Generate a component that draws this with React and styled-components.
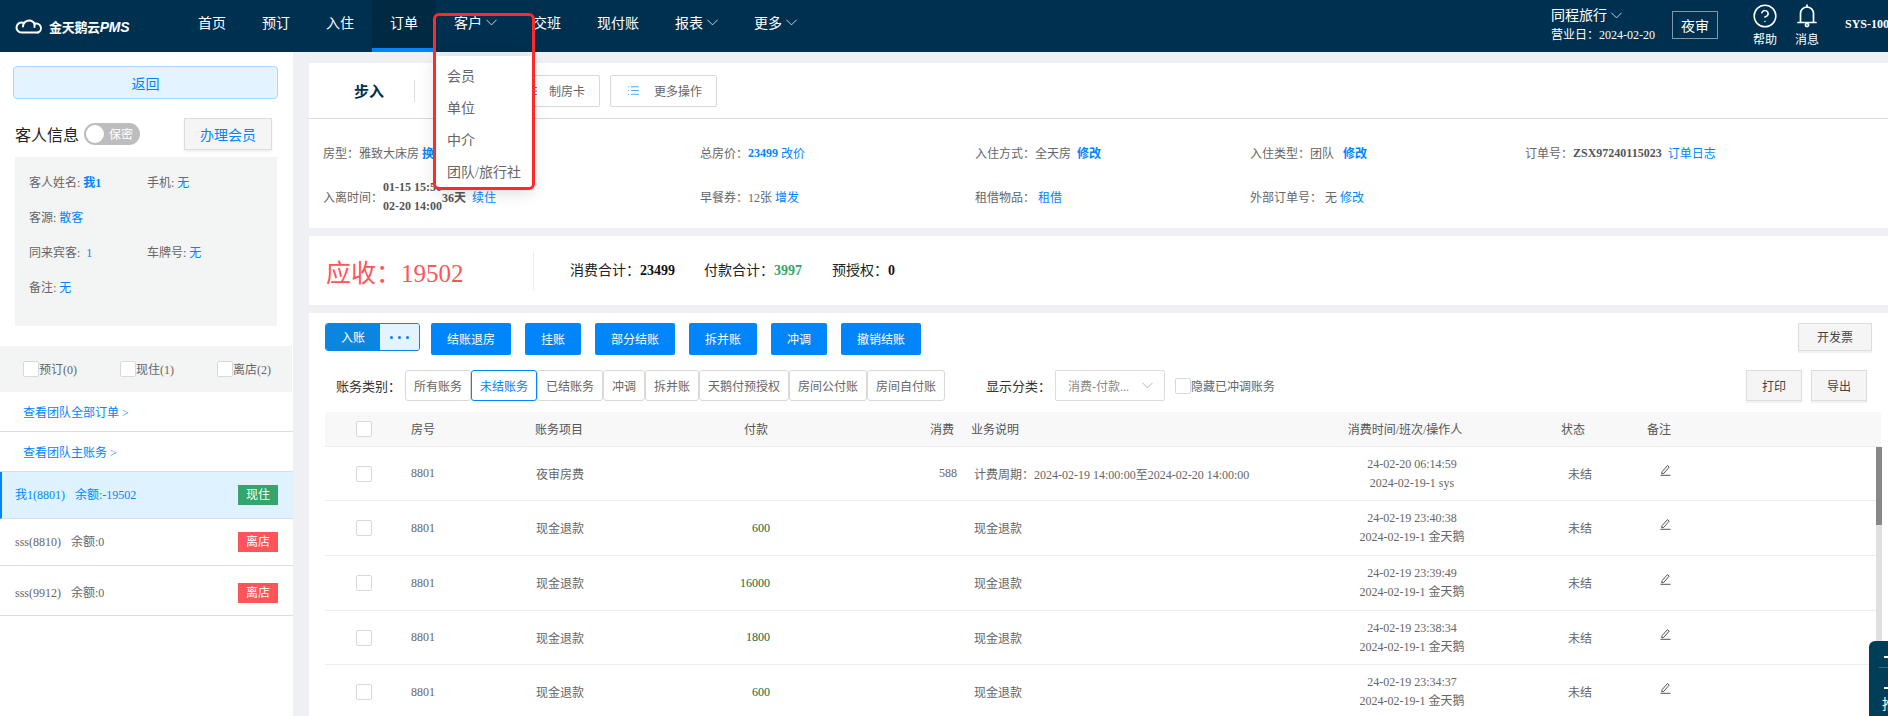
import styled, { createGlobalStyle } from "styled-components";
import { ChevronDown, CircleHelp, List } from "lucide-react";

const GlobalStyle = createGlobalStyle`
  * { box-sizing: border-box; }
  html, body { margin: 0; padding: 0; background: #eff0f4; }
  body {
    font-family: "Liberation Serif", "Noto Sans CJK SC", serif;
    font-size: 12px;
    color: #666;
  }
`;

const Page = styled.div`
  position: relative;
  width: 1888px;
  height: 716px;
  overflow: hidden;
  background: #eff0f4;
`;

const Header = styled.header`
  display: flex;
  height: 52px;
  background: #00304f;
  color: #fff;
`;

const Logo = styled.div`
  display: flex;
  align-items: center;
  gap: 5px;
  width: 180px;
  padding-left: 15px;
  flex-shrink: 0;
`;

const LogoText = styled.span`
  font-family: "Noto Sans CJK SC", sans-serif;
  font-size: 13px;
  font-weight: 700;
  white-space: nowrap;
  letter-spacing: -0.3px;

  em {
    font-family: "Liberation Sans", sans-serif;
    font-size: 14px;
    font-style: italic;
    font-weight: 700;
  }
`;

const Nav = styled.nav`
  display: flex;
  flex: 1;
`;

const NavItem = styled.div`
  display: flex;
  align-items: center;
  gap: 4px;
  height: 52px;
  padding: 0 18px 4px;
  font-size: 14px;
  white-space: nowrap;
  background: ${(p) => (p.$active ? "#012a42" : "transparent")};
  border-bottom: 4px solid ${(p) => (p.$active ? "#0084ff" : "transparent")};
`;

const Arrow = styled(ChevronDown)`
  margin: 0 -4px;
  flex-shrink: 0;
`;

const HeaderRight = styled.div`
  display: flex;
  width: 337px;
  overflow: hidden;
  flex-shrink: 0;
`;

const HotelBlock = styled.div`
  width: 121px;
  padding-top: 6px;
  flex-shrink: 0;
`;

const HotelName = styled.div`
  display: flex;
  align-items: center;
  gap: 4px;
  font-size: 14px;
  line-height: 19px;
`;

const BizDate = styled.div`
  margin-top: 1px;
  font-size: 12px;
  line-height: 18px;
  white-space: nowrap;
`;

const AuditButton = styled.div`
  display: flex;
  align-items: center;
  justify-content: center;
  width: 46px;
  height: 28px;
  margin-top: 11px;
  font-size: 14px;
  border: 1px solid rgba(255, 255, 255, 0.5);
  flex-shrink: 0;
`;

const HeaderTool = styled.div`
  display: flex;
  flex-direction: column;
  align-items: center;
  width: 42px;
  margin-left: ${(p) => p.$ml || 0}px;
  flex-shrink: 0;
  font-size: 12px;
`;

const ToolIcon = styled.div`
  display: flex;
  align-items: center;
  justify-content: center;
  height: 26px;
  margin-top: 3px;
  margin-bottom: 1px;
`;

const UserName = styled.div`
  margin: 17px 0 0 17px;
  font-size: 12px;
  line-height: 14px;
  font-weight: 700;
  white-space: nowrap;
`;

const Body = styled.div`
  display: flex;
  height: 664px;
`;

const Sidebar = styled.aside`
  width: 293px;
  background: #fff;
  flex-shrink: 0;
`;

const BackButton = styled.div`
  display: flex;
  align-items: center;
  justify-content: center;
  height: 33px;
  margin: 14px 15px 0 13px;
  font-size: 14px;
  color: #0084ff;
  background: #e3f3ff;
  border: 1px solid #a9d7ff;
  border-radius: 4px;
`;

const GuestHead = styled.div`
  display: flex;
  align-items: center;
  height: 32px;
  margin-top: 19px;
  padding: 0 21px 0 15px;
`;

const GuestTitle = styled.span`
  font-size: 16px;
  color: #222;
`;

const Toggle = styled.div`
  display: flex;
  align-items: center;
  width: 56px;
  height: 22px;
  margin-left: 5px;
  padding: 2px;
  color: #fff;
  background: #bdbdbd;
  border-radius: 11px;
`;

const ToggleKnob = styled.span`
  width: 18px;
  height: 18px;
  margin-right: 5px;
  background: #fff;
  border-radius: 50%;
`;

const MemberButton = styled.div`
  display: flex;
  align-items: center;
  justify-content: center;
  width: 88px;
  height: 32px;
  margin-left: auto;
  font-size: 14px;
  color: #0084ff;
  background: #f5f5f5;
  border: 1px solid #ddd;
  box-shadow: 0 2px 2px rgba(0, 0, 0, 0.06);
`;

const InfoBox = styled.div`
  display: grid;
  grid-template-columns: 118px 1fr;
  grid-auto-rows: 35px;
  align-items: center;
  height: 169px;
  margin: 7px 16px 0 15px;
  padding: 7px 14px 0;
  background: #f3f4f4;
`;

const BlueText = styled.span`
  color: #0084ff;
  font-weight: ${(p) => (p.$bold ? 700 : 400)};
  margin-left: ${(p) => p.$ml || 0}px;
`;

const StrongText = styled.span`
  color: #555;
  font-weight: 700;
`;

const FilterBand = styled.div`
  display: flex;
  align-items: center;
  width: 292px;
  height: 46px;
  margin-top: 20px;
  padding-left: 23px;
  background: #f3f4f4;
`;

const FilterItem = styled.label`
  display: flex;
  align-items: center;
  width: 97px;
  flex-shrink: 0;
  white-space: nowrap;
`;

const Box = styled.span`
  display: inline-block;
  width: 16px;
  height: 16px;
  background: #fff;
  border: 1px solid #d9d9d9;
  border-radius: 2px;
  flex-shrink: 0;
`;

const TeamLink = styled.div`
  display: flex;
  align-items: center;
  height: 40px;
  padding-left: 23px;
  color: #0084ff;
  border-bottom: 1px solid #ddd;
`;

const RoomRow = styled.div`
  display: flex;
  align-items: flex-start;
  height: ${(p) => p.$h}px;
  padding: ${(p) => p.$top}px 15px 0 ${(p) => (p.$active ? 13 : 15)}px;
  font-size: 12px;
  line-height: 20px;
  color: ${(p) => (p.$active ? "#0084ff" : "#666")};
  background: ${(p) => (p.$active ? "#def3ff" : "#fff")};
  border-left: ${(p) => (p.$active ? "2px solid #0084ff" : "none")};
  border-bottom: 1px solid #ddd;
`;

const RoomName = styled.span`
  width: ${(p) => p.$w}px;
`;

const StatusTag = styled.span`
  display: flex;
  align-items: center;
  justify-content: center;
  width: 40px;
  height: 20px;
  margin-left: auto;
  font-size: 12px;
  color: #fff;
  background: ${(p) => (p.$in ? "#34a56b" : "#ff5558")};
`;

const Main = styled.main`
  display: flex;
  flex-direction: column;
  gap: 8px;
  flex: 1;
  margin: 11px 0 0 16px;
  min-width: 0;
`;

const Card = styled.section`
  background: #fff;
`;

const Toolbar = styled.div`
  display: flex;
  align-items: center;
  height: 56px;
  padding-left: 45px;
  border-bottom: 1px solid #d9d9d9;
`;

const StepIn = styled.span`
  font-size: 15px;
  font-weight: 700;
  color: #00304f;
`;

const ToolDivider = styled.span`
  width: 1px;
  height: 22px;
  margin: 0 94px 0 30px;
  background: #ddd;
`;

const OutlineButton = styled.div`
  display: flex;
  align-items: center;
  gap: 8px;
  height: 32px;
  margin-right: ${(p) => p.$mr || 0}px;
  padding: ${(p) => p.$pad};
  color: #666;
  background: #fff;
  border: 1px solid #d9d9d9;
  border-radius: 2px;
`;

const OrderGrid = styled.div`
  display: grid;
  grid-template-columns: 377px repeat(4, 275px);
  grid-auto-rows: 44px;
  align-items: center;
  height: 109px;
  padding: 12px 0 0 14px;
`;

const Field = styled.div`
  display: flex;
  align-items: center;
  white-space: nowrap;
`;

const DateStack = styled.div`
  width: 59px;
  line-height: 19px;
  font-weight: 700;
  color: #555;
`;

const TotalCard = styled(Card)`
  display: flex;
  align-items: center;
  height: 69px;
  padding-left: 17px;
  color: #222;
  font-size: 14px;
`;

const Receivable = styled.span`
  width: 207px;
  font-size: 25px;
  color: #ff5558;
  white-space: nowrap;
`;

const TotalDivider = styled.span`
  width: 1px;
  height: 39px;
  margin-right: 36px;
  background: #eee;
`;

const TotalItem = styled.span`
  width: ${(p) => p.$w}px;
  margin-top: -4px;
  white-space: nowrap;

  b {
    color: ${(p) => p.$color || "#111"};
  }
`;

const LedgerCard = styled(Card)`
  position: relative;
  flex: 1;
  padding: 10px 7px 0 16px;
  overflow: hidden;
`;

const ActionRow = styled.div`
  display: flex;
  align-items: flex-start;
  gap: 14px;
  height: 32px;
`;

const SplitButton = styled.div`
  display: flex;
  width: 95px;
  height: 28px;
  margin-right: -3px;
  border: 1px solid #0a85e0;
  border-radius: 3px;
  overflow: hidden;
`;

const SplitMain = styled.span`
  display: flex;
  align-items: center;
  justify-content: center;
  width: 54px;
  color: #fff;
  background: #0a85e0;
`;

const SplitMore = styled.span`
  display: flex;
  align-items: center;
  justify-content: center;
  flex: 1;
  gap: 5px;
  background: #e3f3ff;

  i {
    width: 3px;
    height: 3px;
    background: #0a85e0;
    border-radius: 50%;
  }
`;

const ActionButton = styled.div`
  display: flex;
  align-items: center;
  justify-content: center;
  width: ${(p) => p.$w}px;
  height: 32px;
  color: #fff;
  background: #0085fb;
  border-radius: 2px;
`;

const GreyButton = styled.div`
  display: flex;
  align-items: center;
  justify-content: center;
  width: ${(p) => p.$w}px;
  height: ${(p) => p.$h}px;
  margin-left: ${(p) => p.$ml || "0"};
  margin-right: ${(p) => p.$mr || 0}px;
  color: #444;
  background: #f5f5f5;
  border: 1px solid #ddd;
  box-shadow: 0 2px 1px rgba(0, 0, 0, 0.05);
`;

const FilterRow = styled.div`
  display: flex;
  align-items: center;
  height: 31px;
  margin-top: 15px;
`;

const FilterLabel = styled.span`
  width: ${(p) => p.$w}px;
  margin-left: ${(p) => p.$ml}px;
  font-size: 13px;
  color: #333;
  white-space: nowrap;
`;

const Segment = styled.div`
  display: flex;
  align-items: center;
  justify-content: center;
  width: ${(p) => p.$w}px;
  height: 31px;
  color: ${(p) => (p.$active ? "#0084ff" : "#666")};
  border: 1px solid ${(p) => (p.$active ? "#0084ff" : "#d9d9d9")};
  border-radius: 3px;
`;

const SelectBox = styled.div`
  display: flex;
  align-items: center;
  justify-content: space-between;
  width: 110px;
  height: 31px;
  padding: 0 7px 0 12px;
  color: #888;
  border: 1px solid #ddd;
  border-radius: 2px;
`;

const HideCheck = styled.label`
  display: flex;
  align-items: center;
  margin-left: 10px;
`;

const TableHead = styled.div`
  display: grid;
  grid-template-columns: 86px 124px 135px 98px 186px 346px 210px 137px 1fr;
  align-items: center;
  height: 35px;
  margin-top: 11px;
  color: #555;
  background: #f8f8f8;
  border-bottom: 1px solid #eee;
`;

const TableRow = styled.div`
  display: grid;
  grid-template-columns: 86px 124px 135px 100px 187px 343px 210px 137px 1fr;
  align-items: center;
  height: ${(p) => p.$h}px;
  margin-right: 5px;
  color: #666;
  border-bottom: 1px solid #eee;
`;

const CheckCell = styled.div`
  padding-left: 31px;
  display: flex;
`;

const Cell = styled.div`
  text-align: ${(p) => p.$align || "left"};
  padding-left: ${(p) => p.$pl || 0}px;
  color: ${(p) => p.$color || "inherit"};
  white-space: nowrap;
`;

const TimeCell = styled.div`
  padding-left: 14px;
  text-align: center;
  line-height: 19px;
`;

const EditCell = styled.div`
  display: flex;
  padding: 0 0 8px 13px;
`;

const ScrollTrack = styled.div`
  position: absolute;
  top: 134px;
  right: 6px;
  bottom: 0;
  width: 6px;
  background: #e0e0e0;
`;

const ScrollThumb = styled.div`
  width: 6px;
  height: 78px;
  background: #888;
`;

const DropMenu = styled.div`
  position: absolute;
  top: 56px;
  left: 436px;
  width: 96px;
  height: 132px;
  padding-top: 3px;
  background: #fff;
  box-shadow: 0 4px 16px rgba(0, 0, 0, 0.15);
`;

const DropItem = styled.div`
  display: flex;
  align-items: center;
  height: 32px;
  padding-left: 11px;
  font-size: 14px;
  color: #666;
  white-space: nowrap;
`;

const Annotation = styled.div`
  position: absolute;
  top: 13px;
  left: 433px;
  width: 102px;
  height: 177px;
  border: 3px solid #ff2a2a;
  border-radius: 6px;
`;

const CornerWidget = styled.div`
  position: absolute;
  top: 641px;
  left: 1869px;
  width: 40px;
  height: 90px;
  padding-left: 10px;
  color: #fff;
  background: #003e58;
  border-radius: 6px 0 0 0;
`;

const CornerDash = styled.div`
  width: 10px;
  height: 2px;
  margin: ${(p) => p.$top}px 0 0 5px;
  background: #fff;
`;

const CornerLine = styled.div`
  height: 1px;
  margin-top: 9px;
  background: #2f6c85;
`;

const CornerText = styled.div`
  margin: 7px 0 0 3px;
  font-size: 14px;
  line-height: 18px;
  white-space: nowrap;
`;

const Cloud = () => (
  <svg width="29" height="16" viewBox="0 0 29 16" fill="none" stroke="#fff" strokeWidth="2" strokeLinecap="round">
    <path d="M23 14.5H6.5a5 5 0 1 1 2.2-9.5" />
    <path d="M8 8.5A6.2 6.2 0 0 1 19.5 5.5V9" />
    <path d="M19.5 5.8a4.4 4.4 0 1 1 3.5 8.7" />
  </svg>
);

const BellIcon = () => (
  <svg width="20" height="25" viewBox="0 0 20 25" fill="none" stroke="#fff" strokeWidth="1.7">
    <path d="M3.5 18V9.5a6.5 6.5 0 0 1 13 0V18" />
    <path d="M1 18.5h18" strokeLinecap="round" />
    <path d="M10 3V1" strokeLinecap="round" />
    <circle cx="10" cy="21" r="1.6" />
  </svg>
);

const EditIcon = () => (
  <svg width="11" height="12" viewBox="0 0 11 12" fill="none" stroke="#555" strokeWidth="1">
    <path d="M2 7.8 7.4 1.6l1.8 1.5-5.4 6.2-2.1.5z" strokeLinejoin="round" />
    <path d="M0.5 11.3h10" />
  </svg>
);

const navItems = [
  { label: "首页" },
  { label: "预订" },
  { label: "入住" },
  { label: "订单", active: true },
  { label: "客户", arrow: true },
  { label: "交班" },
  { label: "现付账" },
  { label: "报表", arrow: true },
  { label: "更多", arrow: true },
];

const actions = [
  ["结账退房", 80],
  ["挂账", 56],
  ["部分结账", 80],
  ["拆并账", 68],
  ["冲调", 56],
  ["撤销结账", 80],
];

const segments = [
  ["所有账务", 66],
  ["未结账务", 66, true],
  ["已结账务", 66],
  ["冲调", 42],
  ["拆并账", 54],
  ["天鹅付预授权", 90],
  ["房间公付账", 78],
  ["房间自付账", 78],
];

const rows = [
  { h: 54, item: "夜审房费", cost: "588", note: "计费周期：2024-02-19 14:00:00至2024-02-20 14:00:00", time: "24-02-20 06:14:59", op: "2024-02-19-1 sys" },
  { h: 55, item: "现金退款", pay: "600", note: "现金退款", time: "24-02-19 23:40:38", op: "2024-02-19-1 金天鹅" },
  { h: 55, item: "现金退款", pay: "16000", note: "现金退款", time: "24-02-19 23:39:49", op: "2024-02-19-1 金天鹅" },
  { h: 54, item: "现金退款", pay: "1800", note: "现金退款", time: "24-02-19 23:38:34", op: "2024-02-19-1 金天鹅" },
  { h: 55, item: "现金退款", pay: "600", note: "现金退款", time: "24-02-19 23:34:37", op: "2024-02-19-1 金天鹅" },
];

const App = () => (
  <Page>
    <GlobalStyle />
    <Header>
      <Logo>
        <Cloud />
        <LogoText>
          金天鹅云<em>PMS</em>
        </LogoText>
      </Logo>
      <Nav>
        {navItems.map((n) => (
          <NavItem key={n.label} $active={n.active}>
            {n.label}
            {n.arrow && <Arrow size={19} strokeWidth={1} />}
          </NavItem>
        ))}
      </Nav>
      <HeaderRight>
        <HotelBlock>
          <HotelName>
            同程旅行 <Arrow size={19} strokeWidth={1} />
          </HotelName>
          <BizDate>营业日：2024-02-20</BizDate>
        </HotelBlock>
        <AuditButton>夜审</AuditButton>
        <HeaderTool $ml={26}>
          <ToolIcon>
            <CircleHelp size={26} strokeWidth={1.4} />
          </ToolIcon>
          帮助
        </HeaderTool>
        <HeaderTool>
          <ToolIcon>
            <BellIcon />
          </ToolIcon>
          消息
        </HeaderTool>
        <UserName>SYS-1001</UserName>
      </HeaderRight>
    </Header>
    <Body>
      <Sidebar>
        <BackButton>返回</BackButton>
        <GuestHead>
          <GuestTitle>客人信息</GuestTitle>
          <Toggle>
            <ToggleKnob />
            保密
          </Toggle>
          <MemberButton>办理会员</MemberButton>
        </GuestHead>
        <InfoBox>
          <span>
            客人姓名: <BlueText $bold>我1</BlueText>
          </span>
          <span>
            手机: <BlueText>无</BlueText>
          </span>
          <span>
            客源: <BlueText>散客</BlueText>
          </span>
          <span />
          <span>
            同来宾客: <BlueText $ml={3}>1</BlueText>
          </span>
          <span>
            车牌号: <BlueText>无</BlueText>
          </span>
          <span>
            备注: <BlueText>无</BlueText>
          </span>
        </InfoBox>
        <FilterBand>
          <FilterItem>
            <Box />
            预订(0)
          </FilterItem>
          <FilterItem>
            <Box />
            现住(1)
          </FilterItem>
          <FilterItem>
            <Box />
            离店(2)
          </FilterItem>
        </FilterBand>
        <TeamLink>查看团队全部订单 &gt;</TeamLink>
        <TeamLink>查看团队主账务 &gt;</TeamLink>
        <RoomRow $h={47} $top={13} $active>
          <RoomName $w={60}>我1(8801)</RoomName>
          <span>余额:-19502</span>
          <StatusTag $in>现住</StatusTag>
        </RoomRow>
        <RoomRow $h={47} $top={13}>
          <RoomName $w={56}>sss(8810)</RoomName>
          <span>余额:0</span>
          <StatusTag>离店</StatusTag>
        </RoomRow>
        <RoomRow $h={50} $top={17}>
          <RoomName $w={56}>sss(9912)</RoomName>
          <span>余额:0</span>
          <StatusTag>离店</StatusTag>
        </RoomRow>
      </Sidebar>
      <Main>
        <Card>
          <Toolbar>
            <StepIn>步入</StepIn>
            <ToolDivider />
            <OutlineButton $pad="0 14px 0 16px" $mr={10}>
              <List size={12} color="#0084ff" />
              &nbsp;制房卡
            </OutlineButton>
            <OutlineButton $pad="0 14px 0 16px">
              <List size={13} color="#4aa8ff" />
              &nbsp;&nbsp;更多操作
            </OutlineButton>
          </Toolbar>
          <OrderGrid>
            <Field>
              房型：雅致大床房&nbsp;<BlueText $bold>换房</BlueText>
            </Field>
            <Field>
              总房价：<BlueText $bold>23499</BlueText>&nbsp;<BlueText>改价</BlueText>
            </Field>
            <Field>
              入住方式：全天房&nbsp;&nbsp;<BlueText $bold>修改</BlueText>
            </Field>
            <Field>
              入住类型：团队&nbsp;&nbsp;&nbsp;<BlueText $bold>修改</BlueText>
            </Field>
            <Field>
              订单号：<StrongText>ZSX97240115023</StrongText>&nbsp;&nbsp;<BlueText>订单日志</BlueText>
            </Field>
            <Field>
              入离时间：
              <DateStack>
                <div>01-15 15:50</div>
                <div>02-20 14:00</div>
              </DateStack>
              <StrongText>36天</StrongText>
              <BlueText $ml={6}>续住</BlueText>
            </Field>
            <Field>
              早餐券：12张&nbsp;<BlueText>增发</BlueText>
            </Field>
            <Field>
              租借物品：&nbsp;<BlueText>租借</BlueText>
            </Field>
            <Field>
              外部订单号：&nbsp;无&nbsp;<BlueText>修改</BlueText>
            </Field>
          </OrderGrid>
        </Card>
        <TotalCard>
          <Receivable>应收：19502</Receivable>
          <TotalDivider />
          <TotalItem $w={134}>
            消费合计：<b>23499</b>
          </TotalItem>
          <TotalItem $w={128} $color="#34a56b">
            付款合计：<b>3997</b>
          </TotalItem>
          <TotalItem $w={80}>
            预授权：<b>0</b>
          </TotalItem>
        </TotalCard>
        <LedgerCard>
          <ActionRow>
            <SplitButton>
              <SplitMain>入账</SplitMain>
              <SplitMore>
                <i />
                <i />
                <i />
              </SplitMore>
            </SplitButton>
            {actions.map(([label, w]) => (
              <ActionButton key={label} $w={w}>
                {label}
              </ActionButton>
            ))}
            <GreyButton $w={74} $h={28} $ml="auto" $mr={9}>
              开发票
            </GreyButton>
          </ActionRow>
          <FilterRow>
            <FilterLabel $w={69} $ml={11}>
              账务类别：
            </FilterLabel>
            {segments.map(([label, w, active]) => (
              <Segment key={label} $w={w} $active={active}>
                {label}
              </Segment>
            ))}
            <FilterLabel $w={69} $ml={41}>
              显示分类：
            </FilterLabel>
            <SelectBox>
              消费-付款...
              <ChevronDown size={19} strokeWidth={0.9} color="#999" />
            </SelectBox>
            <HideCheck>
              <Box />
              隐藏已冲调账务
            </HideCheck>
            <GreyButton $w={56} $h={31} $ml="auto" $mr={9}>
              打印
            </GreyButton>
            <GreyButton $w={56} $h={31} $mr={14}>
              导出
            </GreyButton>
          </FilterRow>
          <TableHead>
            <CheckCell>
              <Box />
            </CheckCell>
            <Cell>房号</Cell>
            <Cell>账务项目</Cell>
            <Cell $align="right">付款</Cell>
            <Cell $align="right">消费</Cell>
            <Cell $pl={17}>业务说明</Cell>
            <Cell $align="center">消费时间/班次/操作人</Cell>
            <Cell $pl={51}>状态</Cell>
            <Cell>备注</Cell>
          </TableHead>
          {rows.map((r) => (
            <TableRow key={r.time} $h={r.h}>
              <CheckCell>
                <Box />
              </CheckCell>
              <Cell>8801</Cell>
              <Cell $pl={1}>{r.item}</Cell>
              <Cell $align="right" $color="#0d6b3d">
                {r.pay}
              </Cell>
              <Cell $align="right">{r.cost}</Cell>
              <Cell $pl={17}>{r.note}</Cell>
              <TimeCell>
                <div>{r.time}</div>
                <div>{r.op}</div>
              </TimeCell>
              <Cell $pl={58}>未结</Cell>
              <EditCell>
                <EditIcon />
              </EditCell>
            </TableRow>
          ))}
          <ScrollTrack>
            <ScrollThumb />
          </ScrollTrack>
        </LedgerCard>
      </Main>
    </Body>
    <DropMenu>
      <DropItem>会员</DropItem>
      <DropItem>单位</DropItem>
      <DropItem>中介</DropItem>
      <DropItem>团队/旅行社</DropItem>
    </DropMenu>
    <Annotation />
    <CornerWidget>
      <CornerDash $top={15} />
      <CornerLine />
      <CornerDash $top={19} />
      <CornerText>推荐</CornerText>
    </CornerWidget>
  </Page>
);

export default App;
